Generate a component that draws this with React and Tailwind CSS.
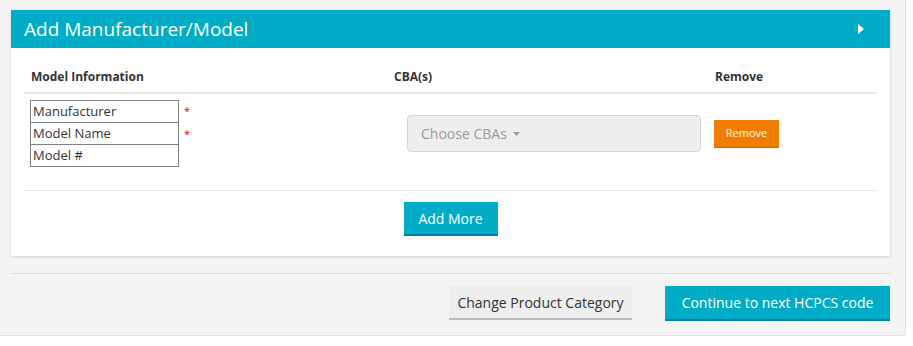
export default function App() {
  const font = { fontFamily: '"Open Sans", "Noto Sans", sans-serif' };
  return (
    <div style={font} className="w-[906px] h-[336px] bg-[#f4f4f4] border-r border-b border-[#e2e2e2] rounded-br-[3px] pt-[10px] pl-[11px]">
      <div className="w-[879px] shadow-[0_1px_3px_rgba(0,0,0,0.15)]">
        <div className="h-[38px] bg-[#00acc6] flex items-center justify-between pl-[13px] pr-[26px]">
          <span className="text-white text-[19px] leading-none">Add Manufacturer/Model</span>
          <svg width="6" height="10" viewBox="0 0 6 10"><path d="M0 0 L6 5 L0 10 Z" fill="#fff" /></svg>
        </div>
        <div className="bg-white px-[13px]">
          <div className="grid grid-cols-[363px_321px_169px] border-b-2 border-[#e4e4e4] pt-[20px] pb-[7px] text-[12px] leading-[17px] font-bold text-[#333]">
            <div className="pl-[7px]">Model Information</div>
            <div className="pl-[7px]">CBA(s)</div>
            <div className="pl-[7px]">Remove</div>
          </div>
          <div className="grid grid-cols-[363px_321px_169px] items-center border-b border-[#e4e4e4] pt-[6px] pb-[23px]">
            <div className="pl-[6px] flex flex-col">
              {[
                ["Manufacturer", true],
                ["Model Name", true],
                ["Model #", false],
              ].map(([label, req], i) => (
                <div key={i} className="flex items-start">
                  <div className={"w-[149px] h-[23px] border border-[#808080] bg-white text-[13px] leading-[21px] text-[#333] pl-[2px] " + (i > 0 ? "-mt-px" : "")}>
                    {label}
                  </div>
                  {req ? <span className="text-[#e00] text-[11px] ml-[5px] leading-[11px] mt-[5px]">*</span> : null}
                </div>
              ))}
            </div>
            <div className="pl-[20px]">
              <div className="w-[294px] h-[37px] bg-[#eeeeee] border border-[#d5d5d5] rounded-[4px] flex items-center pl-[13px] text-[14px] text-[#9a9a9a]">
                Choose CBAs
                <svg className="ml-[6px]" width="7" height="4" viewBox="0 0 7 4"><path d="M0 0 L7 0 L3.5 4 Z" fill="#9a9a9a" /></svg>
              </div>
            </div>
            <div className="pl-[6px]">
              <button className="w-[65px] h-[28px] bg-[#f07d00] border-b border-[#c86400] text-white text-[11px] rounded-[1px]">Remove</button>
            </div>
          </div>
          <div className="flex justify-center pt-[11px] pb-[20px]">
            <button className="w-[94px] h-[34px] bg-[#00acc6] border-b-2 border-[#00809a] text-white text-[14px]">Add More</button>
          </div>
        </div>
      </div>
      <div className="w-[879px] mt-[17px] border-t border-[#dcdcdc]" />
      <div className="w-[879px] flex justify-end gap-[33px] mt-[12px]">
        <button className="w-[183px] h-[34px] bg-[#eeeeee] border-b-2 border-[#bdbdbd] text-[#333] text-[14px]">Change Product Category</button>
        <button className="w-[225px] h-[35px] bg-[#00acc6] border-b-2 border-[#00809a] text-white text-[14px]">Continue to next HCPCS code</button>
      </div>
    </div>
  );
}
